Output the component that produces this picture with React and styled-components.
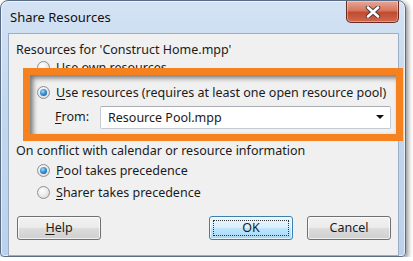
import styled, { createGlobalStyle } from "styled-components"

const Global = createGlobalStyle`
    html, body {
        margin: 0;
        padding: 0;
        background: #ffffff;
    }
    body {
        font-family: "Noto Sans", "Open Sans", sans-serif;
        font-size: 12.5px;
        color: #1b1b1b;
    }
`

const Window = styled.div`
    width: 404px;
    height: 255px;
    border: 1px solid #5b6d84;
    border-radius: 8px 8px 4px 4px;
    background: linear-gradient(180deg, #d4e3f4 0%, #c3d7ee 40%, #bcd2ec 100%);
    box-shadow: 2px 2px 5px rgba(0, 0, 0, 0.45), inset 0 0 0 1px rgba(255, 255, 255, 0.6);
    display: flex;
    flex-direction: column;
`

const TitleBar = styled.div`
    height: 32px;
    display: flex;
    justify-content: space-between;
    align-items: flex-start;
    padding: 0 6px 0 9px;

    h1 {
        margin: 0;
        padding-top: 7px;
        font-size: 13px;
        font-weight: 400;
        color: #111;
        line-height: 18px;
    }
`

const CloseButton = styled.div`
    width: 51px;
    height: 21px;
    border: 1px solid #6b2a22;
    border-top: none;
    border-radius: 0 0 5px 5px;
    background: linear-gradient(180deg, #e8a797 0%, #d7775f 45%, #c24a2f 55%, #cf6a4f 100%);
    box-shadow: inset 0 0 0 1px rgba(255, 255, 255, 0.35);
    display: flex;
    align-items: center;
    justify-content: center;
`

const Client = styled.div`
    margin: 0 6px 0 7px;
    height: 214px;
    border: 1px solid #9aaec6;
    background: #f0f0f0;
    display: flex;
    flex-direction: column;
    padding: 8px 0 0 7px;
`

const Label = styled.div`
    line-height: 16px;
    height: 16px;
    margin-top: ${(p) => p.$top || 0}px;
    white-space: nowrap;
`

const Radio = styled.span`
    width: 11px;
    height: 11px;
    border-radius: 50%;
    border: 1px solid #8c8f94;
    background: radial-gradient(circle at 40% 35%, #ffffff 0%, #e8e8e8 55%, #d0d0d0 100%);
    display: inline-flex;
    align-items: center;
    justify-content: center;
    flex-shrink: 0;

    &::after {
        content: "";
        display: ${(p) => (p.$checked ? "block" : "none")};
        width: 7px;
        height: 7px;
        border-radius: 50%;
        background: radial-gradient(circle at 40% 35%, #9fdcff 0%, #3a93d6 45%, #0e4d86 100%);
    }
`

const RadioRow = styled.div`
    display: flex;
    align-items: center;
    gap: 6px;
    height: 16px;
    line-height: 16px;
    margin-top: ${(p) => p.$top || 0}px;
    margin-left: ${(p) => (p.$indent ?? 21)}px;
    white-space: nowrap;
`

const Highlight = styled.div`
    position: relative;
    z-index: 1;
    margin: -8px -5px 0 7px;
    border: 7px solid #f5821f;
    background: #f0f0f0;
    box-shadow: inset 3px 3px 5px rgba(0, 0, 0, 0.5);
    padding: 10px 5px 5px 7px;
    display: flex;
    flex-direction: column;
`

const FromRow = styled.div`
    display: flex;
    align-items: center;
    margin-top: 5px;
    padding-left: 18px;

    label {
        width: 45px;
        line-height: 16px;
    }
`

const Select = styled.div`
    flex: 1;
    height: 21px;
    border: 1px solid #c5cbd3;
    border-top-color: #abadb3;
    border-radius: 2px;
    background: #ffffff;
    display: flex;
    align-items: center;
    justify-content: space-between;
    padding: 0 6px 0 7px;
`

const Arrow = styled.span`
    width: 0;
    height: 0;
    border-left: 4px solid transparent;
    border-right: 4px solid transparent;
    border-top: 4px solid #111;
`

const ButtonRow = styled.div`
    display: flex;
    margin-top: 15px;
    padding-left: 1px;
    padding-right: 7px;
`

const Button = styled.div`
    width: 82px;
    height: 22px;
    margin-left: ${(p) => p.$gap || 0}px;
    border: 1px solid ${(p) => (p.$default ? "#3c7fb1" : "#707070")};
    border-radius: 3px;
    background: ${(p) =>
        p.$default
            ? "linear-gradient(180deg, #eaf6fd 0%, #d9f0fc 49%, #bee6fd 50%, #a7d9f5 100%)"
            : "linear-gradient(180deg, #f2f2f2 0%, #ebebeb 49%, #dddddd 50%, #cfcfcf 100%)"};
    box-shadow: inset 0 0 0 1px rgba(255, 255, 255, 0.7);
    display: flex;
    align-items: center;
    justify-content: center;
    position: relative;

    &::after {
        content: "";
        display: ${(p) => (p.$default ? "block" : "none")};
        position: absolute;
        inset: 3px;
        border: 1px dotted #333;
    }
`

const Spacer = styled.div`
    flex: 1;
`

const Key = styled.u`
    text-underline-offset: 2px;
`

const App = () => {
    return (
        <>
            <Global />
            <Window>
                <TitleBar>
                    <h1>Share Resources</h1>
                    <CloseButton>
                        <svg width="16" height="12" viewBox="0 0 16 12">
                            <path d="M3 1.5 L13 10.5 M13 1.5 L3 10.5" stroke="#3d3d3d" strokeWidth="4.4" strokeLinecap="round" />
                            <path d="M3 1.5 L13 10.5 M13 1.5 L3 10.5" stroke="#ffffff" strokeWidth="2.6" strokeLinecap="round" />
                        </svg>
                    </CloseButton>
                </TitleBar>
                <Client>
                    <Label>Resources for 'Construct Home.mpp'</Label>
                    <RadioRow $top={2}>
                        <Radio />
                        <span>Use <Key>o</Key>wn resources</span>
                    </RadioRow>
                    <Highlight>
                        <RadioRow $indent={0}>
                            <Radio $checked />
                            <span><Key>U</Key>se resources (requires at least one open resource pool)</span>
                        </RadioRow>
                        <FromRow>
                            <label><Key>F</Key>rom:</label>
                            <Select>
                                <span>Resource Pool.mpp</span>
                                <Arrow />
                            </Select>
                        </FromRow>
                    </Highlight>
                    <Label $top={2}>On conflict with calendar or resource information</Label>
                    <RadioRow $top={4}>
                        <Radio $checked />
                        <span><Key>P</Key>ool takes precedence</span>
                    </RadioRow>
                    <RadioRow $top={6}>
                        <Radio />
                        <span><Key>S</Key>harer takes precedence</span>
                    </RadioRow>
                    <ButtonRow>
                        <Button><span><Key>H</Key>elp</span></Button>
                        <Spacer />
                        <Button $default>OK</Button>
                        <Button $gap={14}>Cancel</Button>
                    </ButtonRow>
                </Client>
            </Window>
        </>
    )
}

export default App
